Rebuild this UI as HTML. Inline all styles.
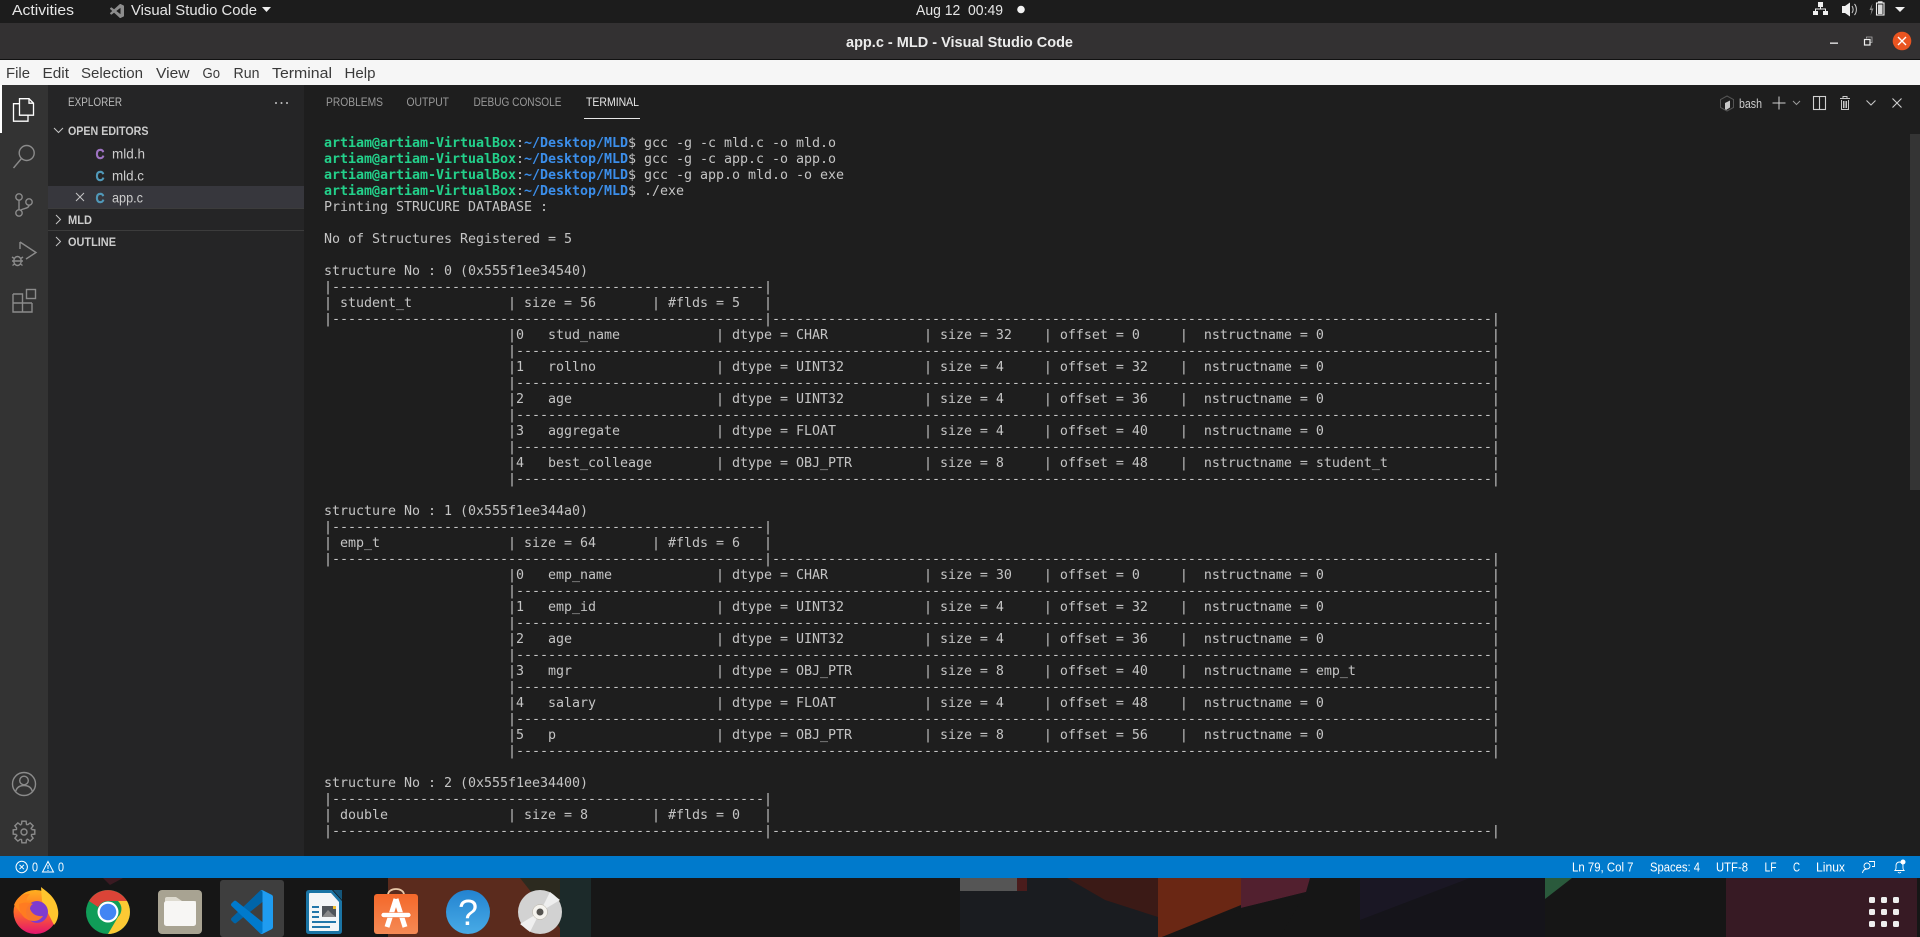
<!DOCTYPE html>
<html lang="en"><head><meta charset="utf-8"><title>app.c - MLD - Visual Studio Code</title>
<style>
html,body{margin:0;padding:0;width:1920px;height:937px;overflow:hidden;background:#161616}
svg.m{position:absolute;left:0;top:0}
svg text{font-family:"Liberation Sans",sans-serif;white-space:pre}
.tb{font-size:15px;fill:#e6e6e6}
.mn{font-size:15px;fill:#3a3a3a}
.sd{font-size:14px;fill:#cccccc}
.hd{font-size:11.5px;font-weight:bold;fill:#cccccc}
.tab{font-size:12px;fill:#9a9a9a}
.st{font-size:13px;fill:#ffffff}
pre{position:absolute;left:324px;top:136px;margin:0;font:13.33px/16px "DejaVu Sans Mono","Liberation Mono",monospace;color:#c4c4c4;letter-spacing:-0.025px}
pre b.g{color:#23d18b}pre b.u{color:#3b8eea}
</style></head><body>
<svg class="m" width="1920" height="937" viewBox="0 0 1920 937" xmlns="http://www.w3.org/2000/svg">
<defs>
<linearGradient id="ff" x1="0" y1="0" x2="0" y2="1"><stop offset="0" stop-color="#ffb01f"/><stop offset=".5" stop-color="#ff6a2a"/><stop offset="1" stop-color="#e3136f"/></linearGradient>
<linearGradient id="sto" x1="0" y1="0" x2="0" y2="1"><stop offset="0" stop-color="#f4682a"/><stop offset="1" stop-color="#f58a55"/></linearGradient>
<linearGradient id="hp" x1="0" y1="0" x2="0" y2="1"><stop offset="0" stop-color="#2383d0"/><stop offset="1" stop-color="#48abe6"/></linearGradient>
</defs>
<!-- wallpaper / dock -->
<rect x="0" y="878" width="1920" height="59" fill="#161616"/>
<polygon points="103,878 123,878 110,885" fill="#3a1a22"/>
<polygon points="388,878 525,878 567,937 388,937" fill="#5b2b1d"/>
<polygon points="520,878 560,878 590,937 567,937" fill="#2c2a1f"/>
<rect x="560" y="878" width="31" height="59" fill="#1c2a2a"/>
<rect x="591" y="878" width="369" height="59" fill="#171717"/>
<rect x="960" y="878" width="200" height="59" fill="#1a1c20"/>
<rect x="960" y="878" width="57" height="13" fill="#555555"/>
<rect x="1017" y="878" width="10" height="13" fill="#4a1c1c"/>
<polygon points="1067,878 1158,878 1158,917 1105,900" fill="#3b1a16"/>
<polygon points="1158,878 1241,878 1241,905 1162,937 1158,937" fill="#6a2714"/>
<polygon points="1241,878 1310,878 1306,892 1241,908" fill="#52202f"/>
<polygon points="1241,908 1306,892 1280,937 1162,937" fill="#161616"/>
<rect x="1360" y="878" width="185" height="59" fill="#15141a"/>
<polygon points="1360,878 1470,878 1360,920" fill="#1a1724"/>
<polygon points="1545,878 1572,878 1545,899" fill="#2a5a3c"/>
<rect x="1726" y="878" width="191" height="59" fill="#371a24"/>
<!-- top bar -->
<rect x="0" y="0" width="1920" height="23" fill="#1c1c1c"/>
<text class="tb" x="12" y="15" textLength="62" lengthAdjust="spacingAndGlyphs">Activities</text>
<g transform="translate(110,4) scale(.14)" fill="#8d8d8d"><path d="M96.46 10.8 75.86.88a6.23 6.23 0 0 0-7.11 1.21L1.35 63.56a4.17 4.17 0 0 0 0 6.16l5.51 5.01a4.17 4.17 0 0 0 5.32.24L93.4 13.2a4.14 4.14 0 0 1 6.6 3.3v-.24a6.25 6.25 0 0 0-3.54-5.46z"/><path d="M96.46 89.2 75.86 99.12a6.23 6.23 0 0 1-7.11-1.21L1.35 36.44a4.17 4.17 0 0 1 0-6.16l5.51-5.01a4.17 4.17 0 0 1 5.32-.24L93.4 86.8a4.14 4.14 0 0 0 6.6-3.3v.24a6.25 6.25 0 0 1-3.54 5.46z"/><path d="M75.86 99.13a6.23 6.23 0 0 1-7.11-1.21c2.3 2.3 6.25.67 6.25-2.59V4.67c0-3.26-3.95-4.89-6.25-2.59a6.23 6.23 0 0 1 7.11-1.2l20.6 9.9A6.25 6.25 0 0 1 100 16.39v67.22a6.25 6.25 0 0 1-3.54 5.63z"/></g>
<text class="tb" x="131" y="15" textLength="126" lengthAdjust="spacingAndGlyphs">Visual Studio Code</text>
<polygon points="262,7 271,7 266.5,12" fill="#eeeeee"/>
<text class="tb" x="916" y="15" textLength="87" lengthAdjust="spacingAndGlyphs">Aug 12  00:49</text>
<circle cx="1021" cy="9.5" r="3.8" fill="#f2f2f2"/>
<!-- network -->
<g fill="#f0f0f0"><rect x="1818" y="2" width="5" height="5"/><rect x="1813" y="11" width="5" height="4"/><rect x="1823" y="11" width="5" height="4"/></g>
<path d="M1820.5 7v2M1815.5 11V9h10v2" fill="none" stroke="#f0f0f0"/>
<!-- speaker -->
<path d="M1842 6h3l5-3.5v14L1845 13h-3z" fill="#f0f0f0"/>
<path d="M1852 6c1.500 2 1.500 5 0 7M1854.500 4c2.500 3 2.500 8 0 11" fill="none" stroke="#cfcfcf" stroke-width="1"/>
<!-- battery -->
<path d="M1872.500 3.500l-3 6.500h2l-1 5.500 3-7h-2z" fill="#8a8a8a"/>
<rect x="1876.500" y="3" width="7.500" height="12" fill="none" stroke="#eee" stroke-width="1.100"/><rect x="1878" y="1.300" width="4.500" height="1.700" fill="#eee"/><rect x="1878" y="4.500" width="4.500" height="9.500" fill="#d8d8d8"/>
<polygon points="1895,7 1905,7 1900,12" fill="#f0f0f0"/>
<!-- title bar -->
<rect x="0" y="23" width="1920" height="36" fill="#333132"/>
<rect x="0" y="59" width="1920" height="1" fill="#111"/>
<text x="846" y="47" textLength="227" lengthAdjust="spacingAndGlyphs" font-size="15" font-weight="bold" fill="#ececec">app.c - MLD - Visual Studio Code</text>
<rect x="1830" y="42.500" width="8" height="1.300" fill="#f0f0f0"/>
<rect x="1864.500" y="39.500" width="5.500" height="5.500" fill="none" stroke="#f0f0f0" stroke-width="1.200"/>
<path d="M1866.500 38.500V37h5.500v5.500h-1.500" fill="none" stroke="#aaa" stroke-width=".8"/>
<circle cx="1902" cy="41" r="9.300" fill="#e95420"/>
<path d="M1898 37l8 8M1906 37l-8 8" stroke="#fff" stroke-width="1.400"/>
<!-- menu bar -->
<rect x="0" y="60" width="1920" height="25" fill="#f6f6f6"/>
<text class="mn" x="6" y="78" textLength="24" lengthAdjust="spacingAndGlyphs">File</text>
<text class="mn" x="42.500" y="78" textLength="26.500" lengthAdjust="spacingAndGlyphs">Edit</text>
<text class="mn" x="81" y="78" textLength="62" lengthAdjust="spacingAndGlyphs">Selection</text>
<text class="mn" x="156" y="78" textLength="33.500" lengthAdjust="spacingAndGlyphs">View</text>
<text class="mn" x="202.500" y="78" textLength="17.500" lengthAdjust="spacingAndGlyphs">Go</text>
<text class="mn" x="233.500" y="78" textLength="26" lengthAdjust="spacingAndGlyphs">Run</text>
<text class="mn" x="272" y="78" textLength="60" lengthAdjust="spacingAndGlyphs">Terminal</text>
<text class="mn" x="344.500" y="78" textLength="31" lengthAdjust="spacingAndGlyphs">Help</text>
<!-- main regions -->
<rect x="0" y="85" width="48" height="771" fill="#333333"/>
<rect x="48" y="85" width="256" height="771" fill="#252526"/>
<rect x="304" y="85" width="1616" height="771" fill="#1e1e1e"/>
<rect x="0" y="85" width="2" height="48" fill="#ffffff"/>
<rect x="1910" y="134" width="10" height="356" fill="#343434"/>
<!-- activity icons -->
<g fill="none" stroke="#ffffff" stroke-width="1.300"><path d="M19.500 98.700h9.500l4.500 4.500v12h-14z"/><path d="M29 98.700v4.500h4.500"/><path d="M19.500 103.700h-6v17.500h14.500v-6"/></g>
<g fill="none" stroke="#8b8b8b" stroke-width="1.400"><circle cx="26.700" cy="153" r="7.500"/><path d="M21.500 158.500L13.500 168"/>
<circle cx="19" cy="197" r="3.200"/><circle cx="19" cy="213" r="3.200"/><circle cx="29" cy="202" r="3.200"/><path d="M19 200.200v9.600M29 205.200c0 3.500-6 3-9 5.300"/>
<path d="M20 242l16 10.500-10 6.500M20 242v7"/><ellipse cx="17.500" cy="261" rx="3.700" ry="4.500"/><path d="M12 257l3 2M23 257l-3 2M12 261h2M21 261h2M12.500 265.500l2-1.500M22.500 265.500l-2-1.500M14 261h7"/>
<path d="M13 294h9.500v18M13 294v18h19v-9M13 303h19"/><rect x="26.500" y="289.500" width="9" height="9"/>
<circle cx="24" cy="784" r="11.500"/><circle cx="24" cy="780.500" r="4.300"/><path d="M15.500 792c1-4.500 4-6.500 8.500-6.500s7.500 2 8.500 6.500"/>
<circle cx="24" cy="832" r="3"/>
<g transform="translate(24,832)"><path d="M-2.500-7.600L-2.100-10.800H2.100L2.500-7.600A8 8 0 0 1 3.600-7.140"/><path transform="rotate(45)" d="M-2.500-7.600L-2.100-10.800H2.100L2.500-7.600A8 8 0 0 1 3.600-7.140"/><path transform="rotate(90)" d="M-2.500-7.600L-2.100-10.800H2.100L2.500-7.600A8 8 0 0 1 3.600-7.140"/><path transform="rotate(135)" d="M-2.500-7.600L-2.100-10.800H2.100L2.500-7.600A8 8 0 0 1 3.600-7.140"/><path transform="rotate(180)" d="M-2.500-7.600L-2.100-10.800H2.100L2.500-7.600A8 8 0 0 1 3.600-7.140"/><path transform="rotate(225)" d="M-2.500-7.600L-2.100-10.800H2.100L2.500-7.600A8 8 0 0 1 3.600-7.140"/><path transform="rotate(270)" d="M-2.500-7.600L-2.100-10.800H2.100L2.500-7.600A8 8 0 0 1 3.600-7.140"/><path transform="rotate(315)" d="M-2.500-7.600L-2.100-10.800H2.100L2.500-7.600A8 8 0 0 1 3.600-7.140"/></g></g>
<!-- sidebar -->
<text x="68" y="106" textLength="54" lengthAdjust="spacingAndGlyphs" font-size="12" fill="#bbbbbb">EXPLORER</text>
<circle cx="276" cy="103" r="1" fill="#c5c5c5"/><circle cx="281.500" cy="103" r="1" fill="#c5c5c5"/><circle cx="287" cy="103" r="1" fill="#c5c5c5"/>
<rect x="48" y="186" width="256" height="22" fill="#37373d"/>
<rect x="48" y="208" width="256" height="1" fill="#3c3c3c"/><rect x="48" y="230" width="256" height="1" fill="#3c3c3c"/>
<path d="M54 128l4.500 4.500 4.500-4.500" fill="none" stroke="#c5c5c5"/>
<text class="hd" x="68" y="135" textLength="80.500" lengthAdjust="spacingAndGlyphs">OPEN EDITORS</text>
<text x="95.500" y="159" font-size="15" font-weight="bold" fill="#a074c4" stroke="#a074c4" stroke-width=".4" textLength="9" lengthAdjust="spacingAndGlyphs">C</text>
<text class="sd" x="112" y="158.500" textLength="33" lengthAdjust="spacingAndGlyphs">mld.h</text>
<text x="95.500" y="181" font-size="15" font-weight="bold" fill="#519aba" stroke="#519aba" stroke-width=".4" textLength="9" lengthAdjust="spacingAndGlyphs">C</text>
<text class="sd" x="112" y="180.500" textLength="32" lengthAdjust="spacingAndGlyphs">mld.c</text>
<path d="M76 193l8 8M84 193l-8 8" stroke="#c5c5c5" stroke-width="1" fill="none"/>
<text x="95.500" y="203" font-size="15" font-weight="bold" fill="#519aba" stroke="#519aba" stroke-width=".4" textLength="9" lengthAdjust="spacingAndGlyphs">C</text>
<text class="sd" x="112" y="202.500" textLength="31" lengthAdjust="spacingAndGlyphs">app.c</text>
<path d="M56 215l4.500 4.500-4.500 4.500" fill="none" stroke="#c5c5c5"/>
<text class="hd" x="68" y="224" textLength="24" lengthAdjust="spacingAndGlyphs">MLD</text>
<path d="M56 237l4.500 4.500-4.500 4.500" fill="none" stroke="#c5c5c5"/>
<text class="hd" x="68" y="246" textLength="48" lengthAdjust="spacingAndGlyphs">OUTLINE</text>
<!-- panel tabs -->
<text class="tab" x="326" y="106" textLength="57" lengthAdjust="spacingAndGlyphs">PROBLEMS</text>
<text class="tab" x="406.500" y="106" textLength="42.500" lengthAdjust="spacingAndGlyphs">OUTPUT</text>
<text class="tab" x="473.500" y="106" textLength="88" lengthAdjust="spacingAndGlyphs">DEBUG CONSOLE</text>
<text class="tab" x="586" y="106" textLength="53" lengthAdjust="spacingAndGlyphs" style="fill:#e7e7e7">TERMINAL</text>
<rect x="584" y="118" width="56" height="1" fill="#e7e7e7"/>
<!-- terminal toolbar -->
<path d="M1727 96l6.500 3.500v8l-6.500 3.500-6.500-3.500v-8z" fill="none" stroke="#555" stroke-width="1"/>
<path d="M1725 103l5-2.500v7l-4 2.500-1-1z" fill="#c8c8c8"/>
<text x="1739" y="108" textLength="23" lengthAdjust="spacingAndGlyphs" font-size="13" fill="#cccccc">bash</text>
<path d="M1779 96.500v13M1772.500 103h13" stroke="#d0d0d0" stroke-width="1" fill="none"/>
<path d="M1793 101l3.500 3.500 3.500-3.500" fill="none" stroke="#9a9a9a"/>
<rect x="1813.500" y="96.500" width="12" height="13" fill="none" stroke="#d0d0d0" stroke-width="1.100"/><path d="M1819.500 96.500v13" stroke="#d0d0d0" stroke-width="1.100"/>
<path d="M1840 98.500h10M1843 98v-1.500h4v1.500M1841.500 100v9.500h7V100M1843.500 101v7M1845 101v7M1846.500 101v7" fill="none" stroke="#c8c8c8" stroke-width="1"/>
<path d="M1866.500 100.500l4.500 4.500 4.500-4.500" fill="none" stroke="#c5c5c5" stroke-width="1.100"/>
<path d="M1892.500 98.500l9 9M1901.500 98.500l-9 9" fill="none" stroke="#d0d0d0" stroke-width="1.100"/>
<!-- status bar -->
<rect x="0" y="856" width="1920" height="22" fill="#007acc"/>
<circle cx="21.700" cy="867" r="5.700" fill="none" stroke="#fff" stroke-width="1"/><path d="M19.500 864.800l4.400 4.400M23.900 864.800l-4.400 4.400" stroke="#fff" stroke-width="1"/>
<text class="st" x="32" y="871.500" textLength="6" lengthAdjust="spacingAndGlyphs">0</text>
<path d="M48 861.500l5.500 10.500h-11zM48 865v4M48 870v1" fill="none" stroke="#fff" stroke-width="1"/>
<text class="st" x="58" y="871.500" textLength="6" lengthAdjust="spacingAndGlyphs">0</text>
<text class="st" x="1572" y="871.500" textLength="61.500" lengthAdjust="spacingAndGlyphs">Ln 79, Col 7</text>
<text class="st" x="1650" y="871.500" textLength="50" lengthAdjust="spacingAndGlyphs">Spaces: 4</text>
<text class="st" x="1716" y="871.500" textLength="32" lengthAdjust="spacingAndGlyphs">UTF-8</text>
<text class="st" x="1764.500" y="871.500" textLength="12" lengthAdjust="spacingAndGlyphs">LF</text>
<text class="st" x="1793" y="871.500" textLength="7" lengthAdjust="spacingAndGlyphs">C</text>
<text class="st" x="1816" y="871.500" textLength="29" lengthAdjust="spacingAndGlyphs">Linux</text>
<g fill="none" stroke="#fff" stroke-width=".9"><circle cx="1867" cy="866" r="3"/><path d="M1862.500 873c.5-3 2-4 4.500-4M1869 861.500h5.500v5h-2.500"/>
<path d="M1895 870.500c1.500-1.500 1-3.500 1-5 0-2 1.500-3.500 3.500-3.500s3.500 1.500 3.500 3.500c0 1.500-.5 3.500 1 5zM1898 872c.5 1.200 2.500 1.200 3 0"/></g>
<circle cx="1903" cy="862" r="2.500" fill="#fff"/>
<!-- dock icons -->
<rect x="220" y="880" width="64" height="57" rx="3" fill="#3e3e3e"/>
<!-- firefox -->
<circle cx="35.500" cy="912" r="22" fill="url(#ff)"/>
<path d="M41 887c6 5 15 10 17 23 1 6-1 12-4 15l-12-24z" fill="#ffc52e"/>
<path d="M14 905c3-8 9-12 16-11-3 3-4 5-3 7 4-1 10-1 14 3l-16 14z" fill="#ff8a1e"/>
<circle cx="37" cy="912" r="11" fill="#7e3bd0"/>
<path d="M19 904c5-2 10-2 14 0-2 1-3 3-3 5 2 5 7 8 13 7-2 3-5 5-9 5-8 0-15-6-15-17z" fill="#ff7a22" opacity=".95"/>
<!-- chrome -->
<circle cx="108" cy="912" r="22" fill="#109d58"/>
<path d="M89 901a22 22 0 0 1 38 0h-19a11 11 0 0 0-10 6z" fill="#db4437"/>
<path d="M127 901a22 22 0 0 1-19 33l10-17a11 11 0 0 0 0-16z" fill="#fcc934"/>
<circle cx="108" cy="912" r="10.500" fill="#ffffff"/><circle cx="108" cy="912" r="8.300" fill="#4285f4"/>
<!-- files -->
<rect x="158" y="890" width="44" height="44" rx="4" fill="#a8a392"/>
<path d="M165 899q0-2 2-2h9l6 4h14v2h-31z" fill="#dedbd0"/>
<rect x="164" y="901" width="32" height="25" rx="2.500" fill="#f7f6f4"/>
<!-- vscode -->
<g transform="translate(231,890) scale(.42,.44)"><path fill="#0065a9" d="M96.46 10.8 75.86.88a6.23 6.23 0 0 0-7.11 1.21L1.35 63.56a4.17 4.17 0 0 0 0 6.16l5.51 5.01a4.17 4.17 0 0 0 5.32.24L93.4 13.2a4.14 4.14 0 0 1 6.6 3.3v-.24a6.25 6.25 0 0 0-3.54-5.46z"/><path fill="#007acc" d="M96.46 89.2 75.86 99.12a6.23 6.23 0 0 1-7.11-1.21L1.35 36.44a4.17 4.17 0 0 1 0-6.16l5.51-5.01a4.17 4.17 0 0 1 5.32-.24L93.4 86.8a4.14 4.14 0 0 0 6.6-3.3v.24a6.25 6.25 0 0 1-3.54 5.46z"/><path fill="#1f9cf0" d="M75.86 99.13a6.23 6.23 0 0 1-7.11-1.21c2.3 2.3 6.25.67 6.25-2.59V4.67c0-3.26-3.95-4.89-6.25-2.59a6.23 6.23 0 0 1 7.11-1.2l20.6 9.9A6.25 6.25 0 0 1 100 16.39v67.22a6.25 6.25 0 0 1-3.54 5.63z"/></g>
<!-- writer -->
<path d="M309 890h23l10 11v30q0 3-3 3h-30q-3 0-3-3v-38q0-3 3-3z" fill="#1b75a5"/>
<path d="M310 893h21l8 9v28q0 1-1 1h-28q-1 0-1-1v-36q0-1 1-1z" fill="#f4f6f7"/>
<polygon points="333,890 342,890 342,900" fill="#14567a"/>
<g fill="#2277aa"><rect x="312" y="906" width="7" height="2"/><rect x="312" y="911" width="7" height="2"/><rect x="312" y="916" width="7" height="2"/><rect x="312" y="921" width="24" height="2"/><rect x="312" y="926" width="18" height="2"/></g>
<rect x="322" y="906" width="14" height="11" fill="#50555a"/><polygon points="322,917 328,910 332,914 336,917" fill="#8a8a8a"/><rect x="333" y="906" width="3" height="3" fill="#f2c12e"/>
<!-- store -->
<path d="M388 895c0-8 16-8 16 0" fill="none" stroke="#e8c8a8" stroke-width="1.800"/>
<rect x="374" y="894" width="44" height="40" rx="3" fill="url(#sto)"/>
<path d="M396 899l-9 28M396 899l9 28" stroke="#fff" stroke-width="5" fill="none"/>
<rect x="381" y="912.500" width="30" height="5" rx="2.500" fill="#fff" stroke="#f4682a" stroke-width=".6"/>
<!-- help -->
<circle cx="468" cy="912" r="22" fill="url(#hp)"/>
<text x="468" y="925" text-anchor="middle" font-size="36" fill="#ffffff">?</text>
<!-- dvd -->
<circle cx="540" cy="912" r="22" fill="#d2d2d2"/>
<polygon points="540,912 550,892 560,900" fill="#eeeeee"/>
<polygon points="540,912 530,932 520,924" fill="#efefef"/>
<circle cx="540" cy="912" r="7.500" fill="#f5f3ee" stroke="#b5b0a4" stroke-width=".5"/><circle cx="540" cy="912" r="3.500" fill="#55534f"/>
<!-- app grid -->
<g fill="#eeeeee"><rect x="1869" y="897" width="6" height="6" rx="1.500"/><rect x="1881" y="897" width="6" height="6" rx="1.500"/><rect x="1893" y="897" width="6" height="6" rx="1.500"/><rect x="1869" y="909" width="6" height="6" rx="1.500"/><rect x="1881" y="909" width="6" height="6" rx="1.500"/><rect x="1893" y="909" width="6" height="6" rx="1.500"/><rect x="1869" y="921" width="6" height="6" rx="1.500"/><rect x="1881" y="921" width="6" height="6" rx="1.500"/><rect x="1893" y="921" width="6" height="6" rx="1.500"/></g>
</svg>
<pre><b class="g">artiam@artiam-VirtualBox</b>:<b class="u">~/Desktop/MLD</b>$ gcc -g -c mld.c -o mld.o
<b class="g">artiam@artiam-VirtualBox</b>:<b class="u">~/Desktop/MLD</b>$ gcc -g -c app.c -o app.o
<b class="g">artiam@artiam-VirtualBox</b>:<b class="u">~/Desktop/MLD</b>$ gcc -g app.o mld.o -o exe
<b class="g">artiam@artiam-VirtualBox</b>:<b class="u">~/Desktop/MLD</b>$ ./exe
Printing STRUCURE DATABASE :

No of Structures Registered = 5

structure No : 0 (0x555f1ee34540)
|------------------------------------------------------|
| student_t            | size = 56       | #flds = 5   |
|------------------------------------------------------|------------------------------------------------------------------------------------------|
                       |0   stud_name            | dtype = CHAR            | size = 32    | offset = 0     |  nstructname = 0                     |
                       |--------------------------------------------------------------------------------------------------------------------------|
                       |1   rollno               | dtype = UINT32          | size = 4     | offset = 32    |  nstructname = 0                     |
                       |--------------------------------------------------------------------------------------------------------------------------|
                       |2   age                  | dtype = UINT32          | size = 4     | offset = 36    |  nstructname = 0                     |
                       |--------------------------------------------------------------------------------------------------------------------------|
                       |3   aggregate            | dtype = FLOAT           | size = 4     | offset = 40    |  nstructname = 0                     |
                       |--------------------------------------------------------------------------------------------------------------------------|
                       |4   best_colleage        | dtype = OBJ_PTR         | size = 8     | offset = 48    |  nstructname = student_t             |
                       |--------------------------------------------------------------------------------------------------------------------------|

structure No : 1 (0x555f1ee344a0)
|------------------------------------------------------|
| emp_t                | size = 64       | #flds = 6   |
|------------------------------------------------------|------------------------------------------------------------------------------------------|
                       |0   emp_name             | dtype = CHAR            | size = 30    | offset = 0     |  nstructname = 0                     |
                       |--------------------------------------------------------------------------------------------------------------------------|
                       |1   emp_id               | dtype = UINT32          | size = 4     | offset = 32    |  nstructname = 0                     |
                       |--------------------------------------------------------------------------------------------------------------------------|
                       |2   age                  | dtype = UINT32          | size = 4     | offset = 36    |  nstructname = 0                     |
                       |--------------------------------------------------------------------------------------------------------------------------|
                       |3   mgr                  | dtype = OBJ_PTR         | size = 8     | offset = 40    |  nstructname = emp_t                 |
                       |--------------------------------------------------------------------------------------------------------------------------|
                       |4   salary               | dtype = FLOAT           | size = 4     | offset = 48    |  nstructname = 0                     |
                       |--------------------------------------------------------------------------------------------------------------------------|
                       |5   p                    | dtype = OBJ_PTR         | size = 8     | offset = 56    |  nstructname = 0                     |
                       |--------------------------------------------------------------------------------------------------------------------------|

structure No : 2 (0x555f1ee34400)
|------------------------------------------------------|
| double               | size = 8        | #flds = 0   |
|------------------------------------------------------|------------------------------------------------------------------------------------------|</pre>
</body></html>
